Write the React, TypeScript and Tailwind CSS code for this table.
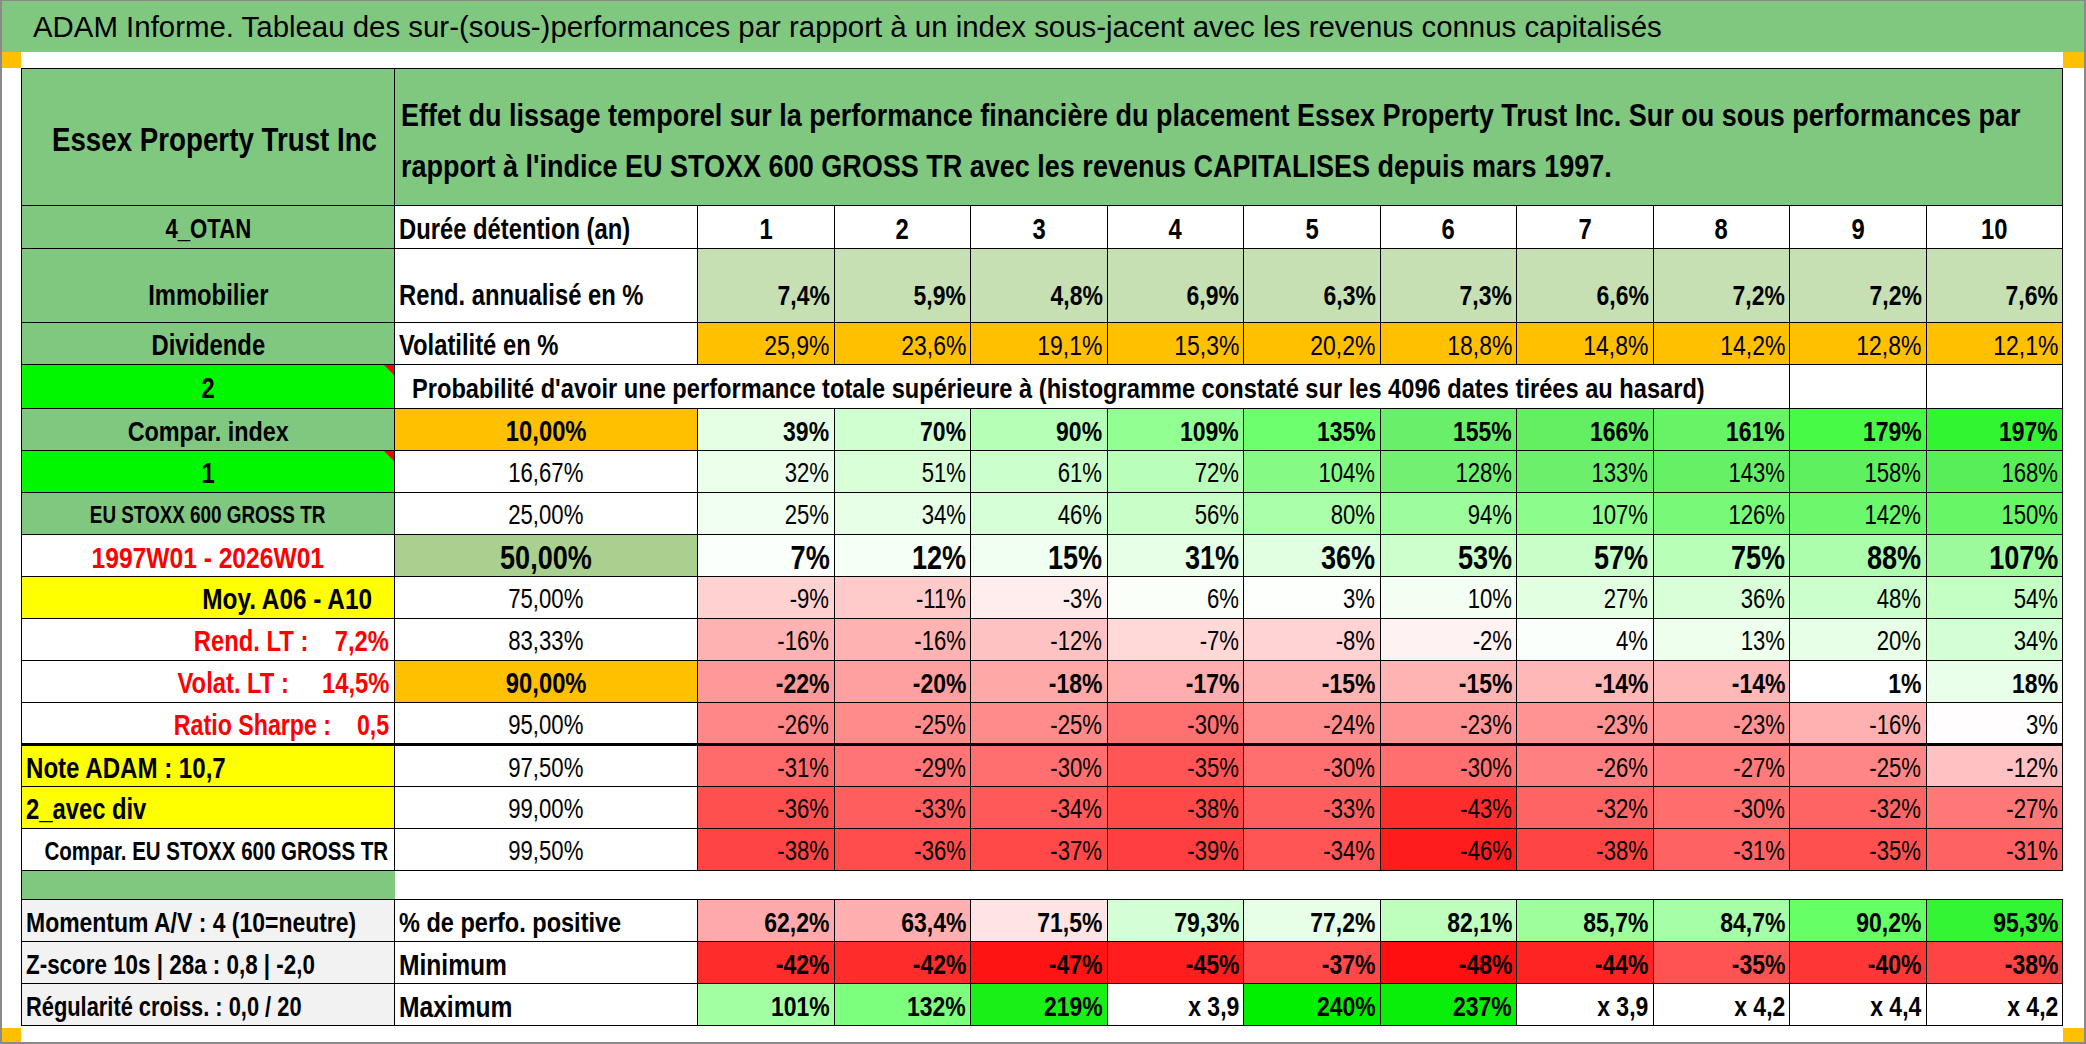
import React from 'react';

type Cell = [string, string];
type Align = 'l' | 'c' | 'r';

interface DistRow {
  label: string;
  labelCls: string;
  labelAlign: Align;
  labelScale?: string;
  pct: string;
  pctCls: string;
  valCls: string;
  cells: Cell[];
  thick?: boolean;
  flag?: boolean;
}

const years = ['1', '2', '3', '4', '5', '6', '7', '8', '9', '10'];
const rend = ['7,4%', '5,9%', '4,8%', '6,9%', '6,3%', '7,3%', '6,6%', '7,2%', '7,2%', '7,6%'];
const vol = ['25,9%', '23,6%', '19,1%', '15,3%', '20,2%', '18,8%', '14,8%', '14,2%', '12,8%', '12,1%'];

const bold = 'font-bold text-[28px]';
const reg = 'text-[27px]';

const distRows: DistRow[] = [
  {
    label: 'Compar. index',
    labelCls: 'bg-[#80c880] font-bold text-[28.5px]',
    labelAlign: 'c',
    pct: '10,00%',
    pctCls: 'bg-[#ffc000] font-bold text-[29px]',
    valCls: bold,
    cells: [
      ['39%', 'bg-[#e4ffe4]'], ['70%', 'bg-[#d0ffd0]'], ['90%', 'bg-[#b6ffb6]'], ['109%', 'bg-[#92ff92]'], ['135%', 'bg-[#6eff6e]'],
      ['155%', 'bg-[#6aef6a]'], ['166%', 'bg-[#62ef62]'], ['161%', 'bg-[#66f366]'], ['179%', 'bg-[#46fa46]'], ['197%', 'bg-[#30f530]'],
    ],
  },
  {
    label: '1',
    labelCls: 'bg-[#00f700] font-bold text-[29px]',
    labelAlign: 'c',
    flag: true,
    pct: '16,67%',
    pctCls: reg,
    valCls: reg,
    cells: [
      ['32%', 'bg-[#ebffeb]'], ['51%', 'bg-[#d9ffd9]'], ['61%', 'bg-[#cbffcb]'], ['72%', 'bg-[#b9ffb9]'], ['104%', 'bg-[#85fa85]'],
      ['128%', 'bg-[#72f072]'], ['133%', 'bg-[#6cf06c]'], ['143%', 'bg-[#66f066]'], ['158%', 'bg-[#5ef05e]'], ['168%', 'bg-[#58ee58]'],
    ],
  },
  {
    label: 'EU STOXX 600 GROSS TR',
    labelCls: 'bg-[#80c880] font-bold text-[23px]',
    labelAlign: 'c',
    pct: '25,00%',
    pctCls: reg,
    valCls: reg,
    cells: [
      ['25%', 'bg-[#f0fff0]'], ['34%', 'bg-[#e6ffe6]'], ['46%', 'bg-[#d7ffd7]'], ['56%', 'bg-[#c8ffc8]'], ['80%', 'bg-[#aaffaa]'],
      ['94%', 'bg-[#9cfd9c]'], ['107%', 'bg-[#8cfc8c]'], ['126%', 'bg-[#78fa78]'], ['142%', 'bg-[#6cf86c]'], ['150%', 'bg-[#66f666]'],
    ],
  },
  {
    label: '1997W01 - 2026W01',
    labelCls: 'bg-white font-bold text-[30px] text-[#ff0000]',
    labelAlign: 'c',
    pct: '50,00%',
    pctCls: 'bg-[#a9d08e] font-bold text-[33px]',
    valCls: 'font-bold text-[33px]',
    cells: [
      ['7%', 'bg-[#fbfffb]'], ['12%', 'bg-[#f6fff6]'], ['15%', 'bg-[#f1fff1]'], ['31%', 'bg-[#e6ffe6]'], ['36%', 'bg-[#e1ffe1]'],
      ['53%', 'bg-[#cdffcd]'], ['57%', 'bg-[#c8ffc8]'], ['75%', 'bg-[#b8ffb8]'], ['88%', 'bg-[#acfdac]'], ['107%', 'bg-[#9cfa9c]'],
    ],
  },
  {
    label: 'Moy. A06 - A10',
    labelCls: 'bg-[#ffff00] pr-[22px] font-bold text-[29px]',
    labelAlign: 'r',
    labelScale: 'scale-x-[0.84]',
    pct: '75,00%',
    pctCls: reg,
    valCls: reg,
    cells: [
      ['-9%', 'bg-[#ffd2d2]'], ['-11%', 'bg-[#ffcaca]'], ['-3%', 'bg-[#ffeded]'], ['6%', 'bg-[#fafffa]'], ['3%', 'bg-[#fdfffd]'],
      ['10%', 'bg-[#f4fff4]'], ['27%', 'bg-[#e2ffe2]'], ['36%', 'bg-[#d8ffd8]'], ['48%', 'bg-[#cbffcb]'], ['54%', 'bg-[#c4ffc4]'],
    ],
  },
  {
    label: 'Rend. LT :    7,2%',
    labelCls: 'bg-white pr-[5px] font-bold text-[29px] text-[#ff0000]',
    labelAlign: 'r',
    pct: '83,33%',
    pctCls: reg,
    valCls: reg,
    cells: [
      ['-16%', 'bg-[#ffb2b2]'], ['-16%', 'bg-[#ffb2b2]'], ['-12%', 'bg-[#ffc2c2]'], ['-7%', 'bg-[#ffd8d8]'], ['-8%', 'bg-[#ffd3d3]'],
      ['-2%', 'bg-[#fff2f2]'], ['4%', 'bg-[#fbfffb]'], ['13%', 'bg-[#eeffee]'], ['20%', 'bg-[#e6ffe6]'], ['34%', 'bg-[#d4ffd4]'],
    ],
  },
  {
    label: 'Volat. LT :     14,5%',
    labelCls: 'bg-white pr-[5px] font-bold text-[29px] text-[#ff0000]',
    labelAlign: 'r',
    pct: '90,00%',
    pctCls: 'bg-[#ffc000] font-bold text-[29px]',
    valCls: bold,
    cells: [
      ['-22%', 'bg-[#ff9898]'], ['-20%', 'bg-[#ffa0a0]'], ['-18%', 'bg-[#ffa8a8]'], ['-17%', 'bg-[#ffadad]'], ['-15%', 'bg-[#ffb4b4]'],
      ['-15%', 'bg-[#ffb4b4]'], ['-14%', 'bg-[#ffb8b8]'], ['-14%', 'bg-[#ffb8b8]'], ['1%', 'bg-white'], ['18%', 'bg-[#eaffea]'],
    ],
  },
  {
    label: 'Ratio Sharpe :    0,5',
    labelCls: 'bg-white pr-[5px] font-bold text-[29px] text-[#ff0000]',
    labelAlign: 'r',
    labelScale: 'scale-x-[0.8]',
    pct: '95,00%',
    pctCls: reg,
    valCls: reg,
    thick: true,
    cells: [
      ['-26%', 'bg-[#ff8787]'], ['-25%', 'bg-[#ff8b8b]'], ['-25%', 'bg-[#ff8b8b]'], ['-30%', 'bg-[#ff7070]'], ['-24%', 'bg-[#ff8e8e]'],
      ['-23%', 'bg-[#ff9292]'], ['-23%', 'bg-[#ff9292]'], ['-23%', 'bg-[#ff9292]'], ['-16%', 'bg-[#ffb0b0]'], ['3%', 'bg-[#fffdfd]'],
    ],
  },
  {
    label: 'Note ADAM : 10,7',
    labelCls: 'bg-[#ffff00] pl-[4px] font-bold text-[29px]',
    labelAlign: 'l',
    labelScale: 'scale-x-[0.83]',
    pct: '97,50%',
    pctCls: reg,
    valCls: reg,
    cells: [
      ['-31%', 'bg-[#ff6b6b]'], ['-29%', 'bg-[#ff7474]'], ['-30%', 'bg-[#ff6f6f]'], ['-35%', 'bg-[#ff5555]'], ['-30%', 'bg-[#ff6f6f]'],
      ['-30%', 'bg-[#ff6f6f]'], ['-26%', 'bg-[#ff8080]'], ['-27%', 'bg-[#ff7b7b]'], ['-25%', 'bg-[#ff8686]'], ['-12%', 'bg-[#ffc1c1]'],
    ],
  },
  {
    label: '2_avec div',
    labelCls: 'bg-[#ffff00] pl-[4px] font-bold text-[29px]',
    labelAlign: 'l',
    pct: '99,00%',
    pctCls: reg,
    valCls: reg,
    cells: [
      ['-36%', 'bg-[#ff5050]'], ['-33%', 'bg-[#ff5e5e]'], ['-34%', 'bg-[#ff5959]'], ['-38%', 'bg-[#ff4848]'], ['-33%', 'bg-[#ff5e5e]'],
      ['-43%', 'bg-[#ff2c2c]'], ['-32%', 'bg-[#ff6464]'], ['-30%', 'bg-[#ff6d6d]'], ['-32%', 'bg-[#ff6464]'], ['-27%', 'bg-[#ff7878]'],
    ],
  },
  {
    label: 'Compar. EU STOXX 600 GROSS TR',
    labelCls: 'bg-white pr-[6px] font-bold text-[25px]',
    labelAlign: 'r',
    pct: '99,50%',
    pctCls: reg,
    valCls: reg,
    cells: [
      ['-38%', 'bg-[#ff4444]'], ['-36%', 'bg-[#ff4d4d]'], ['-37%', 'bg-[#ff4848]'], ['-39%', 'bg-[#ff3f3f]'], ['-34%', 'bg-[#ff5555]'],
      ['-46%', 'bg-[#ff1c1c]'], ['-38%', 'bg-[#ff4444]'], ['-31%', 'bg-[#ff6262]'], ['-35%', 'bg-[#ff5050]'], ['-31%', 'bg-[#ff6262]'],
    ],
  },
];

const statRows: { label: string; labelScale: string; name: string; nameCls: string; nameScale: string; cells: Cell[] }[] = [
  {
    label: 'Momentum A/V : 4 (10=neutre)',
    labelScale: 'scale-x-[0.82]',
    name: '% de perfo. positive',
    nameCls: 'text-[28px]',
    nameScale: 'scale-x-[0.84]',
    cells: [
      ['62,2%', 'bg-[#ffaaaa]'], ['63,4%', 'bg-[#ffafaf]'], ['71,5%', 'bg-[#ffe4e4]'], ['79,3%', 'bg-[#d4ffd4]'], ['77,2%', 'bg-[#e6ffe6]'],
      ['82,1%', 'bg-[#beffbe]'], ['85,7%', 'bg-[#9cff9c]'], ['84,7%', 'bg-[#a6ffa6]'], ['90,2%', 'bg-[#66ff66]'], ['95,3%', 'bg-[#33f533]'],
    ],
  },
  {
    label: 'Z-score 10s | 28a : 0,8 | -2,0',
    labelScale: 'scale-x-[0.8]',
    name: 'Minimum',
    nameCls: 'text-[30px]',
    nameScale: 'scale-x-[0.82]',
    cells: [
      ['-42%', 'bg-[#ff2c2c]'], ['-42%', 'bg-[#ff2c2c]'], ['-47%', 'bg-[#ff1414]'], ['-45%', 'bg-[#ff1e1e]'], ['-37%', 'bg-[#ff4848]'],
      ['-48%', 'bg-[#ff0f0f]'], ['-44%', 'bg-[#ff2424]'], ['-35%', 'bg-[#ff5252]'], ['-40%', 'bg-[#ff3636]'], ['-38%', 'bg-[#ff4444]'],
    ],
  },
  {
    label: 'Régularité croiss. : 0,0 / 20',
    labelScale: 'scale-x-[0.78]',
    name: 'Maximum',
    nameCls: 'text-[30px]',
    nameScale: 'scale-x-[0.82]',
    cells: [
      ['101%', 'bg-[#a2ffa2]'], ['132%', 'bg-[#7cff7c]'], ['219%', 'bg-[#18f018]'], ['x 3,9', 'bg-white'], ['240%', 'bg-[#00f000]'],
      ['237%', 'bg-[#0aef0a]'], ['x 3,9', 'bg-white'], ['x 4,2', 'bg-white'], ['x 4,4', 'bg-white'], ['x 4,2', 'bg-white'],
    ],
  },
];

// the sheet is in a narrow face (Calibri squeezed): compress Arial-metric text horizontally
function T({ a = 'c', s = 'scale-x-[0.82]', children }: { a?: Align; s?: string; children: React.ReactNode }) {
  const justify = a === 'l' ? 'justify-start' : a === 'r' ? 'justify-end' : 'justify-center';
  const origin = a === 'l' ? 'origin-left' : a === 'r' ? 'origin-right' : 'origin-center';
  return (
    <div className={`flex ${justify}`}>
      <span className={`shrink-0 whitespace-pre ${s} ${origin}`}>{children}</span>
    </div>
  );
}

function Flag() {
  return (
    <span className="absolute right-0 top-0 h-0 w-0 border-l-[10px] border-t-[10px] border-l-transparent border-t-[#ff0000]" />
  );
}

const td = 'border border-black p-0 pt-[4px] leading-none whitespace-nowrap';
const num = 'pr-[4px]';

export default function App() {
  return (
    <div className="w-[2086px] h-[1044px] overflow-hidden bg-white border-t border-b-2 border-x-2 border-[#8a8a8a] flex flex-col text-black font-['Liberation_Sans',Arial,sans-serif]">
      <div className="h-[51px] shrink-0 bg-[#80c880] flex items-center pl-[31px] text-[30px] leading-none">
        <span className="shrink-0 whitespace-nowrap scale-x-[0.98] origin-left">
          ADAM Informe. Tableau des sur-(sous-)performances par rapport à un index sous-jacent avec les revenus connus capitalisés
        </span>
      </div>

      <div className="flex flex-1">
        <div className="w-[19px] flex flex-col justify-between">
          <div className="h-[16px] bg-[#ffc000]" />
          <div className="h-[14px] bg-[#ffc000]" />
        </div>

        <div className="flex-1 pt-[16px]">
          <table className="w-[2042px] table-fixed border-collapse">
            <colgroup>
              <col className="w-[373px]" />
              <col className="w-[303px]" />
              {years.map(y => (
                <col key={y} />
              ))}
            </colgroup>
            <tbody>
              <tr className="h-[137px]">
                <td className={`${td} bg-[#80c880] pl-[12px] font-bold text-[33px]`}>
                  <T s="scale-x-[0.84]">Essex Property Trust Inc</T>
                </td>
                <td colSpan={11} className={`${td} bg-[#80c880] pl-[6px] !pt-[8px] font-bold text-[32px] !leading-[51px]`}>
                  <T a="l" s="scale-x-[0.844]">
                    Effet du lissage temporel sur la performance financière du placement Essex Property Trust Inc. Sur ou sous performances par
                  </T>
                  <T a="l" s="scale-x-[0.844]">
                    rapport à l'indice EU STOXX 600 GROSS TR avec les revenus CAPITALISES depuis mars 1997.
                  </T>
                </td>
              </tr>

              <tr className="h-[43px]">
                <td className={`${td} bg-[#80c880] font-bold text-[27px]`}>
                  <T>4_OTAN</T>
                </td>
                <td className={`${td} pl-[4px] font-bold text-[29px]`}>
                  <T a="l">Durée détention (an)</T>
                </td>
                {years.map(y => (
                  <td key={y} className={`${td} font-bold text-[29px]`}>
                    <T>{y}</T>
                  </td>
                ))}
              </tr>

              <tr className="h-[74px]">
                <td className={`${td} bg-[#80c880] align-bottom pb-[12px] font-bold text-[29px]`}>
                  <T>Immobilier</T>
                </td>
                <td className={`${td} pl-[4px] align-bottom pb-[12px] font-bold text-[29px]`}>
                  <T a="l">Rend. annualisé en %</T>
                </td>
                {rend.map((v, i) => (
                  <td key={i} className={`${td} ${num} align-bottom pb-[12px] bg-[#c6e0b4] font-bold text-[28px]`}>
                    <T a="r">{v}</T>
                  </td>
                ))}
              </tr>

              <tr className="h-[42px]">
                <td className={`${td} bg-[#80c880] font-bold text-[29px]`}>
                  <T>Dividende</T>
                </td>
                <td className={`${td} pl-[4px] font-bold text-[29px]`}>
                  <T a="l">Volatilité en %</T>
                </td>
                {vol.map((v, i) => (
                  <td key={i} className={`${td} ${num} bg-[#ffc000] text-[28px]`}>
                    <T a="r">{v}</T>
                  </td>
                ))}
              </tr>

              <tr className="h-[44px]">
                <td className={`${td} relative bg-[#00f700] font-bold text-[29px]`}>
                  <T>2</T>
                  <Flag />
                </td>
                <td colSpan={9} className={`${td} pl-[17px] font-bold text-[28px]`}>
                  <T a="l" s="scale-x-[0.844]">
                    Probabilité d'avoir une performance totale supérieure à (histogramme constaté sur les 4096 dates tirées au hasard)
                  </T>
                </td>
                <td className={td} />
                <td className={td} />
              </tr>

              {distRows.map((r, ri) => (
                <tr key={ri} className="h-[42px]">
                  <td className={`${td} ${r.labelCls} ${r.flag ? 'relative' : ''} ${r.thick ? 'border-b-[3px]' : ''}`}>
                    <T a={r.labelAlign} s={r.labelScale}>
                      {r.label}
                    </T>
                    {r.flag && <Flag />}
                  </td>
                  <td className={`${td} ${r.pctCls} ${r.thick ? 'border-b-[3px]' : ''}`}>
                    <T>{r.pct}</T>
                  </td>
                  {r.cells.map(([v, bg], i) => (
                    <td key={i} className={`${td} ${num} ${bg} ${r.valCls} ${r.thick ? 'border-b-[3px]' : ''}`}>
                      <T a="r">{v}</T>
                    </td>
                  ))}
                </tr>
              ))}

              <tr className="h-[29px]">
                <td className={`${td} bg-[#80c880] border-r-0`} />
                <td colSpan={11} className="p-0 border-0" />
              </tr>

              {statRows.map((r, ri) => (
                <tr key={ri} className="h-[42px]">
                  <td className={`${td} bg-[#f2f2f2] pl-[4px] font-bold text-[28px]`}>
                    <T a="l" s={r.labelScale}>
                      {r.label}
                    </T>
                  </td>
                  <td className={`${td} pl-[4px] font-bold ${r.nameCls}`}>
                    <T a="l" s={r.nameScale}>
                      {r.name}
                    </T>
                  </td>
                  {r.cells.map(([v, bg], i) => (
                    <td key={i} className={`${td} ${num} ${bg} font-bold text-[28px]`}>
                      <T a="r">{v}</T>
                    </td>
                  ))}
                </tr>
              ))}
            </tbody>
          </table>
        </div>

        <div className="w-[21px] flex flex-col justify-between">
          <div className="h-[16px] bg-[#ffc000]" />
          <div className="h-[14px] bg-[#ffc000]" />
        </div>
      </div>
    </div>
  );
}
